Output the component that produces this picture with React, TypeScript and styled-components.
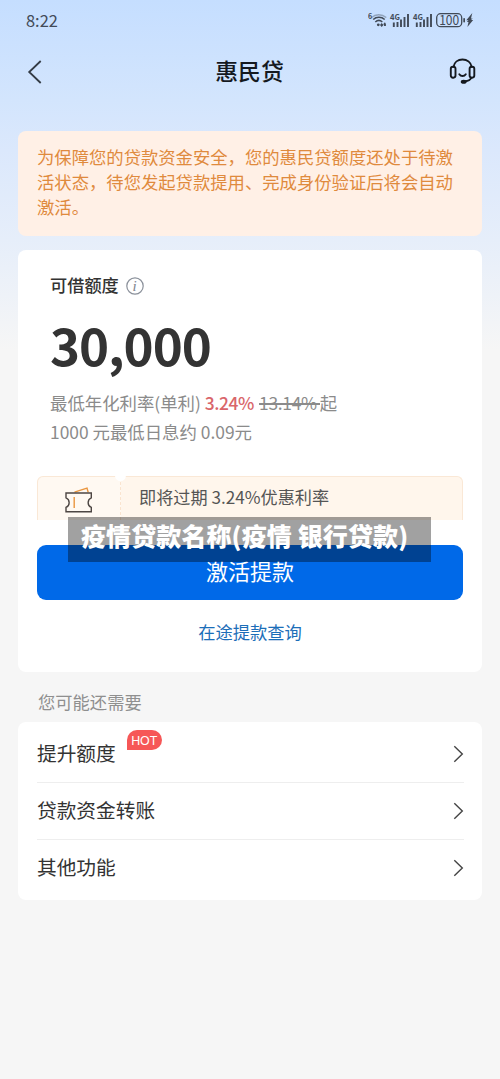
import React from "react";
import styled, { createGlobalStyle } from "styled-components";

const GlobalStyle = createGlobalStyle`
  * { box-sizing: border-box; }
  body { margin: 0; background: #f6f6f6; }
`;

const Page = styled.div`
  position: relative;
  display: flex;
  flex-direction: column;
  width: 500px;
  height: 1079px;
  overflow: hidden;
  color: #333;
  font-family: "Noto Sans CJK SC", "Noto Sans", sans-serif;
  background: linear-gradient(180deg, #c5deff 0px, #d3e5fd 100px, #dbe8fc 150px, #e6eefa 240px, #f6f6f6 350px, #f6f6f6 100%);
`;

const StatusBar = styled.div`
  display: flex;
  align-items: center;
  justify-content: space-between;
  height: 40px;
  padding: 0 24px 0 26px;
  color: #414a57;
`;

const Clock = styled.span`
  font-size: 16.4px;
  line-height: 24px;
`;

const NavBar = styled.header`
  display: grid;
  grid-template-columns: 40px 1fr 40px;
  align-items: center;
  height: 64px;
  padding: 0 23px 0 26px;
  svg { display: block; }
`;

const Title = styled.h1`
  margin: 0;
  padding: 0 4px 2px 0;
  text-align: center;
  font-size: 22.8px;
  font-weight: 500;
  line-height: 34px;
  color: #15191f;
`;

const IconEnd = styled.div`
  display: flex;
  justify-content: flex-end;
`;

const Notice = styled.section`
  height: 105px;
  margin: 27px 18px 0;
  padding: 13px 19px;
  border-radius: 8px;
  background: #fff0e6;
  color: #df8a3d;
  font-size: 17.33px;
  line-height: 25px;
`;

const NoticeLine = styled.div`
  white-space: nowrap;
`;

const CreditCard = styled.section`
  display: flex;
  flex-direction: column;
  height: 422px;
  margin: 14px 18px 0;
  padding: 23px 19px 0;
  border-radius: 8px;
  background: #fff;
`;

const Summary = styled.div`
  padding-left: 13px;
`;

const Label = styled.div`
  display: flex;
  align-items: center;
  gap: 7px;
  height: 26px;
  font-size: 17.2px;
  font-weight: 500;
  line-height: 24px;
  svg { display: block; }
`;

const LabelText = styled.span`
  padding-bottom: 2px;
`;

const Amount = styled.div`
  margin-top: 7px;
  height: 82px;
  font-size: 51px;
  font-weight: 700;
  letter-spacing: -1.05px;
  line-height: 76px;
`;

const RateLine = styled.div`
  height: 29px;
  white-space: nowrap;
  font-size: 17.4px;
  line-height: 29px;
  color: #8b8b8b;
`;

const Rate = styled.span`
  color: #d9666a;
  font-weight: 500;
  letter-spacing: -0.4px;
`;

const OldRate = styled.span`
  margin-left: 5px;
  padding-right: 3px;
  letter-spacing: -0.3px;
  position: relative;
  &::after {
    content: "";
    position: absolute;
    left: 0;
    right: 0;
    top: 13px;
    height: 1.5px;
    background: #8b8b8b;
  }
`;

const Coupon = styled.div`
  position: relative;
  display: flex;
  height: 44px;
  margin-top: 30px;
  border: 1px solid #fae8d6;
  border-bottom: 0;
  border-radius: 6px 6px 0 0;
  background: #fff6ec;
`;

const CouponIcon = styled.div`
  width: 83px;
  padding: 10px 0 0 26px;
  border-right: 1px dashed #fae4cf;
  background: #fff9f2;
  border-radius: 6px 0 0 0;
`;

const CouponNotch = styled.div`
  position: absolute;
  left: 77px;
  top: -7px;
  width: 11px;
  height: 11px;
  border-radius: 50%;
  background: #fff;
`;

const CouponText = styled.div`
  padding-left: 18px;
  font-size: 17.15px;
  line-height: 39px;
  color: #555;
`;

const PrimaryButton = styled.button`
  height: 55px;
  margin-top: 25px;
  padding: 0 0 6px;
  border: 0;
  border-radius: 9px;
  background: #0069e8;
  color: #fff;
  font: 400 22px/48px "Noto Sans CJK SC", sans-serif;
`;

const LinkButton = styled.button`
  align-self: center;
  margin-top: 18px;
  padding: 0;
  border: 0;
  background: none;
  color: #1c6eb8;
  font: 400 17.3px/27px "Noto Sans CJK SC", sans-serif;
`;

const SectionTitle = styled.h2`
  margin: 0;
  height: 50px;
  padding: 0 38px;
  font-size: 17.3px;
  font-weight: 400;
  line-height: 60px;
  color: #8f8f8f;
`;

const Menu = styled.nav`
  height: 178px;
  margin: 0 18px;
  padding: 4px 18px 0 19px;
  border-radius: 8px;
  background: #fff;
`;

const MenuRow = styled.div<{ $last?: boolean }>`
  display: flex;
  align-items: center;
  height: ${(p) => (p.$last ? "56px" : "57px")};
  border-bottom: ${(p) => (p.$last ? "0" : "1px solid #eee")};
  font-size: 19.7px;
  line-height: 54px;
  svg { display: block; margin-left: auto; }
`;

const MenuName = styled.span`
  padding-bottom: 2px;
`;

const Badge = styled.span`
  align-self: flex-start;
  width: 35px;
  height: 20px;
  margin: 4px 0 0 11px;
  border-radius: 10px 10px 10px 0;
  background: #f65757;
  color: #fff;
  text-align: center;
  font: 400 12.4px/22px "Liberation Sans", sans-serif;
`;

const Caption = styled.div`
  position: absolute;
  left: 68px;
  top: 517px;
  width: 363px;
  height: 45px;
  padding-left: 13px;
  background: rgba(0, 0, 0, 0.37);
  color: #fff;
  white-space: nowrap;
  font-size: 25px;
  font-weight: 900;
  letter-spacing: 0.1px;
  line-height: 37px;
`;

const StatusIcons = () => (
  <svg width="108" height="20" viewBox="368 10 108 20" fill="none" stroke="#414a57">
    <g fill="#414a57" stroke="none" fontFamily="Noto Sans CJK SC, sans-serif">
      <text x="368" y="19" fontSize="7" fontWeight="700">6</text>
      <text x="390" y="20" fontSize="8" fontWeight="700" textLength="10" lengthAdjust="spacingAndGlyphs">4G</text>
      <text x="413" y="20" fontSize="8" fontWeight="700" textLength="10" lengthAdjust="spacingAndGlyphs">4G</text>
      <text x="439.2" y="24.8" fontSize="12.8" fontWeight="400" textLength="20" lengthAdjust="spacingAndGlyphs">100</text>
      <circle cx="378.3" cy="24.8" r="1.4" />
      <path d="M380 25l1.7-2 1.7 2-1.7 2zM383.4 24l1.5-1.7 1 1.7v2h-1.7z" />
      <path d="M472.3 13l-6 7.2h2.2l-1.7 1.7h1.7l-1.1 5 5.8-6.8h-2.2l1.7-1.7h-1.7z" />
      <rect x="463.3" y="18" width="1.7" height="4.5" rx=".8" />
    </g>
    <path d="M371.5 17.6c4-3.8 10.2-3.8 14.8 0" strokeWidth="1.3" opacity=".4" />
    <path d="M373.2 19.5c3.2-3 8.2-3 11.5 0M375.3 22c2.2-1.9 5-1.9 7 0" strokeWidth="1.6" />
    {[393, 416].map((x) => (
      <path key={x} strokeWidth="1.9" d={`M${x + 0.8} 27v-4.5M${x + 4.5} 27v-5M${x + 8} 27v-7.5M${x + 11.5} 27v-10M${x + 15} 27v-13`} />
    ))}
    <rect x="436.7" y="13.7" width="25" height="13" rx="4" strokeWidth="1.3" />
  </svg>
);

const BackIcon = () => (
  <svg width="18" height="24" viewBox="0 0 18 24" fill="none" stroke="#333b45" strokeWidth="1.8">
    <path d="M14.7 1L3.2 12l11.5 11" />
  </svg>
);

const HeadsetIcon = () => (
  <svg width="28" height="28" viewBox="0 0 28 28" fill="none" stroke="#15191f" strokeWidth="1.9" strokeLinecap="round">
    <path d="M4.5 8.8C5.2 4.2 9 1.5 13.5 1.5S21.9 4.2 22.7 8.8" />
    <rect x="1.8" y="8.7" width="4.7" height="11" rx="2.1" />
    <rect x="20.6" y="8.7" width="4.7" height="11" rx="2.1" />
    <path d="M10.3 16.2c1.6 2.4 4.9 2.4 6.5 0M22.2 19.8c-.9 2-3 3.2-6 3.4" />
    <ellipse cx="14.7" cy="23.8" rx="2" ry="1.1" fill="#15191f" />
  </svg>
);

const InfoIcon = () => (
  <svg width="18" height="18" viewBox="0 0 18 18" fill="none" stroke="#8b919b">
    <circle cx="9" cy="9" r="8.2" strokeWidth="1.2" />
    <text x="6.6" y="13.6" fontSize="15" fontStyle="italic" fontFamily="Liberation Serif, serif" fill="#7f858f" stroke="none">i</text>
  </svg>
);

const TicketIcon = () => (
  <svg width="30" height="28" viewBox="0 0 30 28" fill="none" strokeWidth="1.4">
    <path d="M10.5 5.2L23 1.2l1.2 4" stroke="#ea963f" />
    <path d="M2 6h25.3v4.8c-4.2 1.7-4.2 8 0 9.5v4.5H2v-4.5c4.2-1.5 4.2-7.8 0-9.5z" stroke="#4d4643" />
    <path d="M10.2 10v11" stroke="#ea963f" />
  </svg>
);

const ChevronIcon = () => (
  <svg width="12" height="18" viewBox="0 0 12 18" fill="none" stroke="#444" strokeWidth="1.4">
    <path d="M2.3 1.2L10.3 9l-8 7.8" />
  </svg>
);

const menuItems = [
  { name: "提升额度", hot: true },
  { name: "贷款资金转账" },
  { name: "其他功能" },
];

export default function App() {
  return (
    <>
      <GlobalStyle />
      <Page>
        <StatusBar>
          <Clock>8:22</Clock>
          <StatusIcons />
        </StatusBar>
        <NavBar>
          <BackIcon />
          <Title>惠民贷</Title>
          <IconEnd><HeadsetIcon /></IconEnd>
        </NavBar>
        <Notice>
          <NoticeLine>为保障您的贷款资金安全，您的惠民贷额度还处于待激</NoticeLine>
          <NoticeLine>活状态，待您发起贷款提用、完成身份验证后将会自动</NoticeLine>
          <NoticeLine>激活。</NoticeLine>
        </Notice>
        <CreditCard>
          <Summary>
            <Label><LabelText>可借额度</LabelText><InfoIcon /></Label>
            <Amount>30,000</Amount>
            <RateLine>
              最低年化利率(单利) <Rate>3.24%</Rate>
              <OldRate>13.14%</OldRate>起
            </RateLine>
            <RateLine>1000 元最低日息约 0.09元</RateLine>
          </Summary>
          <Coupon>
            <CouponIcon><TicketIcon /></CouponIcon>
            <CouponText>即将过期 3.24%优惠利率</CouponText>
            <CouponNotch />
          </Coupon>
          <PrimaryButton>激活提款</PrimaryButton>
          <LinkButton>在途提款查询</LinkButton>
        </CreditCard>
        <SectionTitle>您可能还需要</SectionTitle>
        <Menu>
          {menuItems.map((item, i) => (
            <MenuRow key={item.name} $last={i === menuItems.length - 1}>
              <MenuName>{item.name}</MenuName>
              {item.hot && <Badge>HOT</Badge>}
              <ChevronIcon />
            </MenuRow>
          ))}
        </Menu>
        <Caption>疫情贷款名称(疫情 银行贷款)</Caption>
      </Page>
    </>
  );
}
